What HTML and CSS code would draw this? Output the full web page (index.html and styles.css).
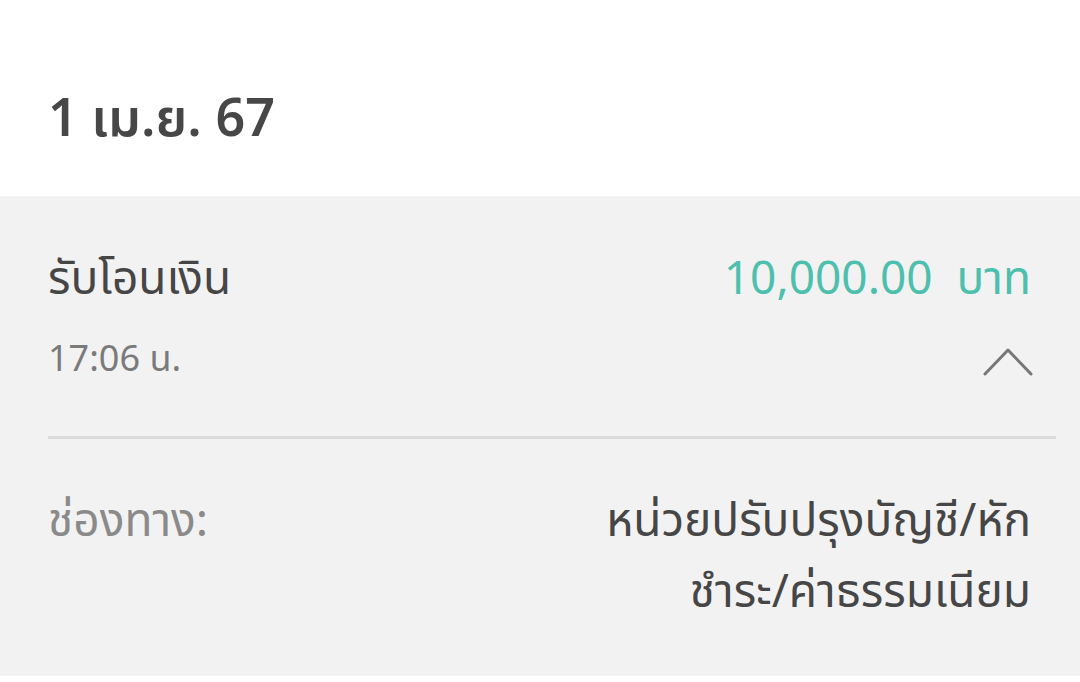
FILE: index.html
```html
<!DOCTYPE html>
<html>
<head>
    <title>รายการเดินบัญชี</title>
    <link rel="stylesheet" href="styles.css">
</head>
<body>
    <div class="date-header">1 เม.ย. 67</div>
    <div class="txn">
        <div class="txn-summary">
            <div class="txn-main">
                <div class="txn-title">รับโอนเงิน</div>
                <div class="txn-amount">10,000.00&nbsp; บาท</div>
            </div>
            <div class="txn-sub">
                <div class="txn-time">17:06 น.</div>
                <svg class="chevron" width="50" height="30" viewBox="0 0 50 30">
                    <polyline points="2,27 25,3 48,27" fill="none" stroke="#777" stroke-width="3" stroke-linecap="round" stroke-linejoin="round"/>
                </svg>
            </div>
        </div>
        <div class="divider"></div>
        <div class="txn-detail">
            <div class="detail-label">ช่องทาง:</div>
            <div class="detail-value">หน่วยปรับปรุงบัญชี/หัก<br>ชำระ/ค่าธรรมเนียม</div>
        </div>
    </div>
</body>
</html>
```

FILE: styles.css
```css
body {
    margin: 0;
    background: #fff;
    font-family: "Noto Sans Thai", "Noto Sans Thai UI", "Noto Sans", sans-serif;
    color: #464646;
}
.date-header {
    height: 196px;
    box-sizing: border-box;
    padding: 90px 48px 0;
    font-size: 52px;
    line-height: 60px;
    font-weight: 600;
    color: #474747;
}
.txn {
    background: #f2f2f2;
    height: 480px;
    box-sizing: border-box;
    padding-left: 48px;
}
.txn-summary {
    padding: 54px 49px 0 0;
}
.txn-main {
    display: flex;
    justify-content: space-between;
    align-items: baseline;
    line-height: 60px;
}
.txn-title {
    font-size: 46px;
    color: #464646;
}
.txn-amount {
    font-size: 46px;
    color: #4dbfad;
}
.txn-sub {
    display: flex;
    justify-content: space-between;
    align-items: flex-start;
    margin-top: 30px;
    height: 96px;
}
.txn-time {
    font-size: 36px;
    line-height: 40px;
    color: #7a7a7a;
}
.chevron {
    margin-top: 7px;
    margin-right: -2px;
}
.divider {
    height: 3px;
    background: #dcdcdc;
    margin-right: 24px;
}
.txn-detail {
    display: flex;
    justify-content: space-between;
    padding: 48px 49px 0 0;
}
.detail-label {
    font-size: 46px;
    line-height: 71px;
    color: #8a8a8a;
}
.detail-value {
    font-size: 46px;
    line-height: 71px;
    text-align: right;
    color: #464646;
}
```
